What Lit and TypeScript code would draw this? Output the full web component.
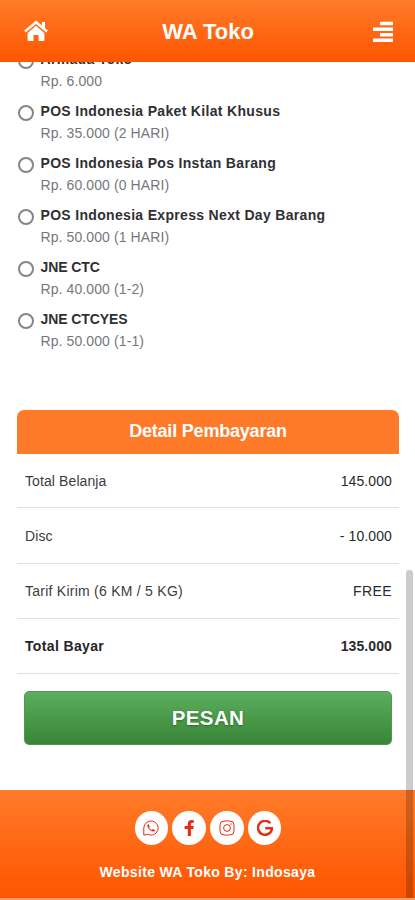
import { LitElement, html, css, svg } from "lit";
import { customElement } from "lit/decorators.js";

interface Courier { name: string; price: string; kind: string; }
interface Line { label: string; value: string; kind: string; }

const couriers: Courier[] = [
  { name: "Armada Toko", price: "Rp. 6.000", kind: "wide" },
  { name: "POS Indonesia Paket Kilat Khusus", price: "Rp. 35.000 (2 HARI)", kind: "wide" },
  { name: "POS Indonesia Pos Instan Barang", price: "Rp. 60.000 (0 HARI)", kind: "wide" },
  { name: "POS Indonesia Express Next Day Barang", price: "Rp. 50.000 (1 HARI)", kind: "wide" },
  { name: "JNE CTC", price: "Rp. 40.000 (1-2)", kind: "tight" },
  { name: "JNE CTCYES", price: "Rp. 50.000 (1-1)", kind: "tight" },
];

const lines: Line[] = [
  { label: "Total Belanja", value: "145.000", kind: "plain" },
  { label: "Disc", value: "- 10.000", kind: "plain" },
  { label: "Tarif Kirim (6 KM / 5 KG)", value: "FREE", kind: "shipping" },
  { label: "Total Bayar", value: "135.000", kind: "total" },
];

const socials = [
  svg`<path d="M.8 15.200V8A7.200 7.100 0 1 1 4.400 14.200Z" fill="none" stroke="currentColor" stroke-width="1"/><path d="M5.400 4.100c-.8.200-1.200 1.100-1 2 .5 2.600 3.200 5.200 5.800 5.500.9.100 1.800-.5 1.900-1.400l-2.200-1.200-1.100 1.100C7.500 9.600 6.500 8.500 6 7.300l.8-1Z" fill="currentColor"/>`,
  svg`<path d="M12.900 9l.45-2.900h-2.800V4.250c0-.8.4-1.550 1.630-1.550h1.270V.25S12.300 0 11.200 0C8.900 0 7.400 1.400 7.400 3.900v2.200H4.200V9h3.200v7h3.150V9Z" fill="currentColor" transform="translate(-.6 0)"/>`,
  svg`<rect x="1" y="1" width="14" height="14" rx="4" fill="none" stroke="currentColor" stroke-width="1"/><circle cx="8" cy="8" r="3.400" fill="none" stroke="currentColor" stroke-width="1"/><circle cx="12" cy="4" r=".7" fill="currentColor"/>`,
  svg`<path d="M13.300 3.200A7 7 0 1 0 15 8.300H8.300" fill="none" stroke="currentColor" stroke-width="2.500"/>`,
];

@customElement("app-root")
export class AppRoot extends LitElement {
  static styles = css`
    :host { display: block; position: relative; height: 900px; overflow: hidden; background: #fff; font: 14px/22px "Liberation Sans", Arial, sans-serif; color: #3c3c3f; }
    .page { display: flex; flex-direction: column; height: 900px; }
    .header { box-sizing: border-box; height: 62px; flex: none; display: grid; grid-template-columns: 26px 1fr 20px; align-items: center; padding: 1px 22px 0 23px; background: linear-gradient(#ff7b29, #ff5500); color: #fff; position: relative; z-index: 1; }
    .title { margin: 0 6px 0 0; text-align: center; font-size: 22px; font-weight: 700; line-height: 30px; }
    .home { width: 26px; height: 22px; margin-bottom: 2px; }
    .menu { width: 20px; height: 22px; }
    .content { height: 728px; flex: none; display: flex; flex-direction: column; }
    .couriers { margin-top: -14px; padding-left: 18px; display: flex; flex-direction: column; gap: 8px; flex: none; }
    .courier { display: flex; gap: 6.500px; height: 44px; }
    .radio { box-sizing: border-box; width: 16px; height: 16px; margin-top: 5px; border: 2px solid #85858a; border-radius: 50%; flex: none; }
    .name { font-weight: 700; white-space: nowrap; color: #303033; }
    .wide { letter-spacing: 0.32px; }
    .tight { letter-spacing: -0.08px; }
    .price { color: #77777b; letter-spacing: 0.1px; }
    .panel { margin: 58px 16px 0 17px; flex: none; }
    .panel-title { margin: 0; height: 44px; line-height: 43px; border-radius: 7px 7px 0 0; background: #ff7a28; color: #fff; text-align: center; font-size: 18px; font-weight: 700; letter-spacing: -0.2px; }
    .line { box-sizing: border-box; height: 55px; display: flex; align-items: center; justify-content: space-between; padding: 0 7px 0 8px; border-bottom: 1px solid #e0e0e0; }
    .line:nth-child(2) { height: 54px; }
    .line:nth-child(3) { height: 56px; }
    .label { letter-spacing: 0.1px; }
    .shipping .label { letter-spacing: 0.25px; }
    .total .label { letter-spacing: 0.36px; }
    .value { color: #2a2a2c; letter-spacing: 0.1px; }
    .shipping .value { letter-spacing: 0.4px; }
    .total { font-weight: 700; color: #252527; }
    .order { display: block; margin: 17px 23px 0 24px; height: 54px; flex: none; border: 1px solid #4b9b4d; border-radius: 5px; background: linear-gradient(#5dae5f, #388537); color: #fff; font: 700 20.500px/52px "Liberation Sans", Arial, sans-serif; letter-spacing: 0.4px; text-align: center; text-shadow: 0 1px 2px #276b28; padding: 0; }
    .footer { height: 108px; flex: none; display: flex; flex-direction: column; align-items: center; background: linear-gradient(#ff7b29, #ff5500); color: #fff; }
    .socials { display: flex; gap: 4px; padding-top: 21px; margin-left: 1px; }
    .social { width: 33.700px; height: 34px; border-radius: 50%; background: #fff; color: #e82c16; display: flex; align-items: center; justify-content: center; }
    .social svg { width: 16px; height: 16px; }
    .credit { margin-top: 16px; font-weight: 700; line-height: 22px; letter-spacing: 0.33px; }
    .edge { height: 2px; background: #ff9c72; }
    .thumb { position: absolute; top: 570px; right: 2px; width: 7px; height: 328px; border-radius: 3px 3px 0 0; background: rgba(0, 0, 0, 0.2); z-index: 2; }
  `;

  render() {
    return html`
      <div class="page">
        <header class="header">
          <svg class="home" viewBox="0 0 26 22">
            <path d="M2 11.500 13 2.200l11 9.300" fill="none" stroke="#fff" stroke-width="2.500"/>
            <path d="M19 2h3v7l-3-2.600Z" fill="#fff"/>
            <path d="M13 5.800 21.400 13v7.200q0 .8-.8.800H15.500v-6h-5v6H5.500q-.9 0-.9-.8V13Z" fill="#fff"/>
          </svg>
          <h1 class="title">WA Toko</h1>
          <svg class="menu" viewBox="0 0 20 22"><path d="M7 .8h13v3.400H7ZM0 6.500h20v3.400H0ZM7 12h13v3.400H7ZM0 17.500h20v3.400H0Z" fill="#fff"/></svg>
        </header>
        <main class="content">
          <div class="couriers">
            ${couriers.map((c) => html`
              <label class="courier">
                <span class="radio"></span>
                <div><div class="name ${c.kind}">${c.name}</div><div class="price">${c.price}</div></div>
              </label>`)}
          </div>
          <section class="panel">
            <h2 class="panel-title">Detail Pembayaran</h2>
            ${lines.map((l) => html`<div class="line ${l.kind}"><span class="label">${l.label}</span><span class="value">${l.value}</span></div>`)}
          </section>
          <button class="order">PESAN</button>
        </main>
        <footer class="footer">
          <div class="socials">${socials.map((s) => html`<a class="social"><svg viewBox="0 0 16 16">${s}</svg></a>`)}</div>
          <div class="credit">Website WA Toko By: Indosaya</div>
        </footer>
        <div class="edge"></div>
      </div>
      <div class="thumb"></div>
    `;
  }
}
